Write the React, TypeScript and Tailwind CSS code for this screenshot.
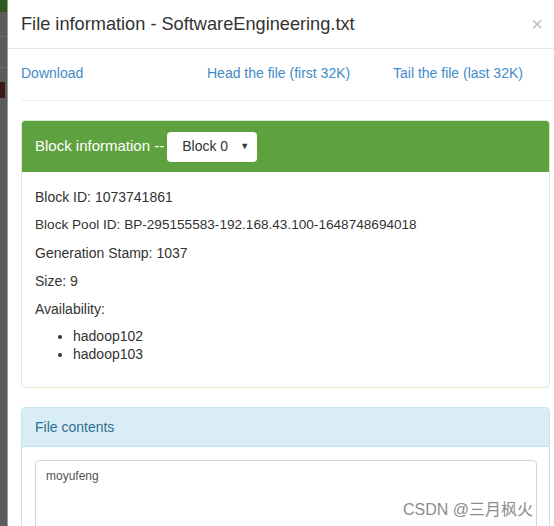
export default function App() {
  const font = { fontFamily: '"Liberation Sans", "Noto Sans CJK SC", sans-serif' };
  return (
    <div className="flex h-[526px] w-[554px] overflow-hidden bg-white text-[14px] text-[#333]" style={font}>
      {/* page behind the modal backdrop */}
      <div className="relative w-[7px] shrink-0 bg-[#5c5c5c]">
        <div className="h-[12px] bg-[#2f5a1f]" />
        <div className="absolute left-0 top-[36px] h-px w-full bg-[#6a6a6a]" />
        <div className="absolute left-0 top-[67px] h-px w-full bg-[#6a6a6a]" />
        <div className="absolute left-0 top-[82px] h-[16px] w-[5px] bg-[#3a1a18]" />
      </div>

      <div className="flex-1 border-l border-[#9a9a9a]">
        <div className="flex h-[49px] items-center justify-between border-b border-[#e5e5e5] pl-[13px] pr-[11px]">
          <h4 className="text-[18.2px] leading-[20px] text-[#333]">File information - SoftwareEngineering.txt</h4>
          <span className="text-[20px] leading-none text-[#c0c0c0]">×</span>
        </div>

        <div className="pl-[13px]">
          <div className="grid h-[46px] grid-cols-[186px_186px_1fr] items-center pt-[2px] text-[#428bca]">
            <a>Download</a>
            <a>Head the file (first 32K)</a>
            <a>Tail the file (last 32K)</a>
          </div>
          <div className="mt-[5px] h-px w-[529px] bg-[#eeeeee]" />

          <div className="mt-[19px] w-[529px] rounded-[4px] border border-[#d9ebcd]">
            <div className="flex h-[51px] items-center gap-[3px] rounded-t-[3px] bg-[#5ea13f] px-[13px] text-[15px] text-white">
              <span>Block information --</span>
              <div className="flex h-[30px] w-[90px] items-center justify-between rounded-[4px] bg-white pl-[15px] pr-[8px] text-[14px] text-[#333]">
                <span>Block 0</span>
                <span className="text-[9px]">▼</span>
              </div>
            </div>
            <div className="px-[13px] pb-[14px] pt-[15px]">
              <p className="mb-[8px] leading-[20px]">Block ID: 1073741861</p>
              <p className="mb-[8px] text-[13.6px] leading-[20px]">Block Pool ID: BP-295155583-192.168.43.100-1648748694018</p>
              <p className="mb-[8px] leading-[20px]">Generation Stamp: 1037</p>
              <p className="mb-[8px] leading-[20px]">Size: 9</p>
              <p className="mb-[8px] leading-[20px]">Availability:</p>
              <ul className="mb-[10px] list-disc pl-[38px] leading-[18px]">
                <li>hadoop102</li>
                <li>hadoop103</li>
              </ul>
            </div>
          </div>

          <div className="mt-[19px] h-[200px] w-[529px] rounded-[4px] border border-[#c4e5ef]">
            <div className="flex h-[39px] items-center border-b border-[#c4e5ef] bg-[#d9edf7] px-[13px] text-[#31708f]">
              File contents
            </div>
            <div className="relative px-[13px] pt-[13px]">
              <div className="h-[120px] w-[502px] rounded-[4px] border border-[#d5d5d5] px-[10px] pt-[6px] text-[12px] text-[#555]">
                moyufeng
              </div>
            </div>
          </div>
        </div>
      </div>

      <div className="absolute left-[403px] top-[498px] text-[16px] text-[#8c8c8c]" style={font}>
        CSDN @三月枫火
      </div>
    </div>
  );
}
